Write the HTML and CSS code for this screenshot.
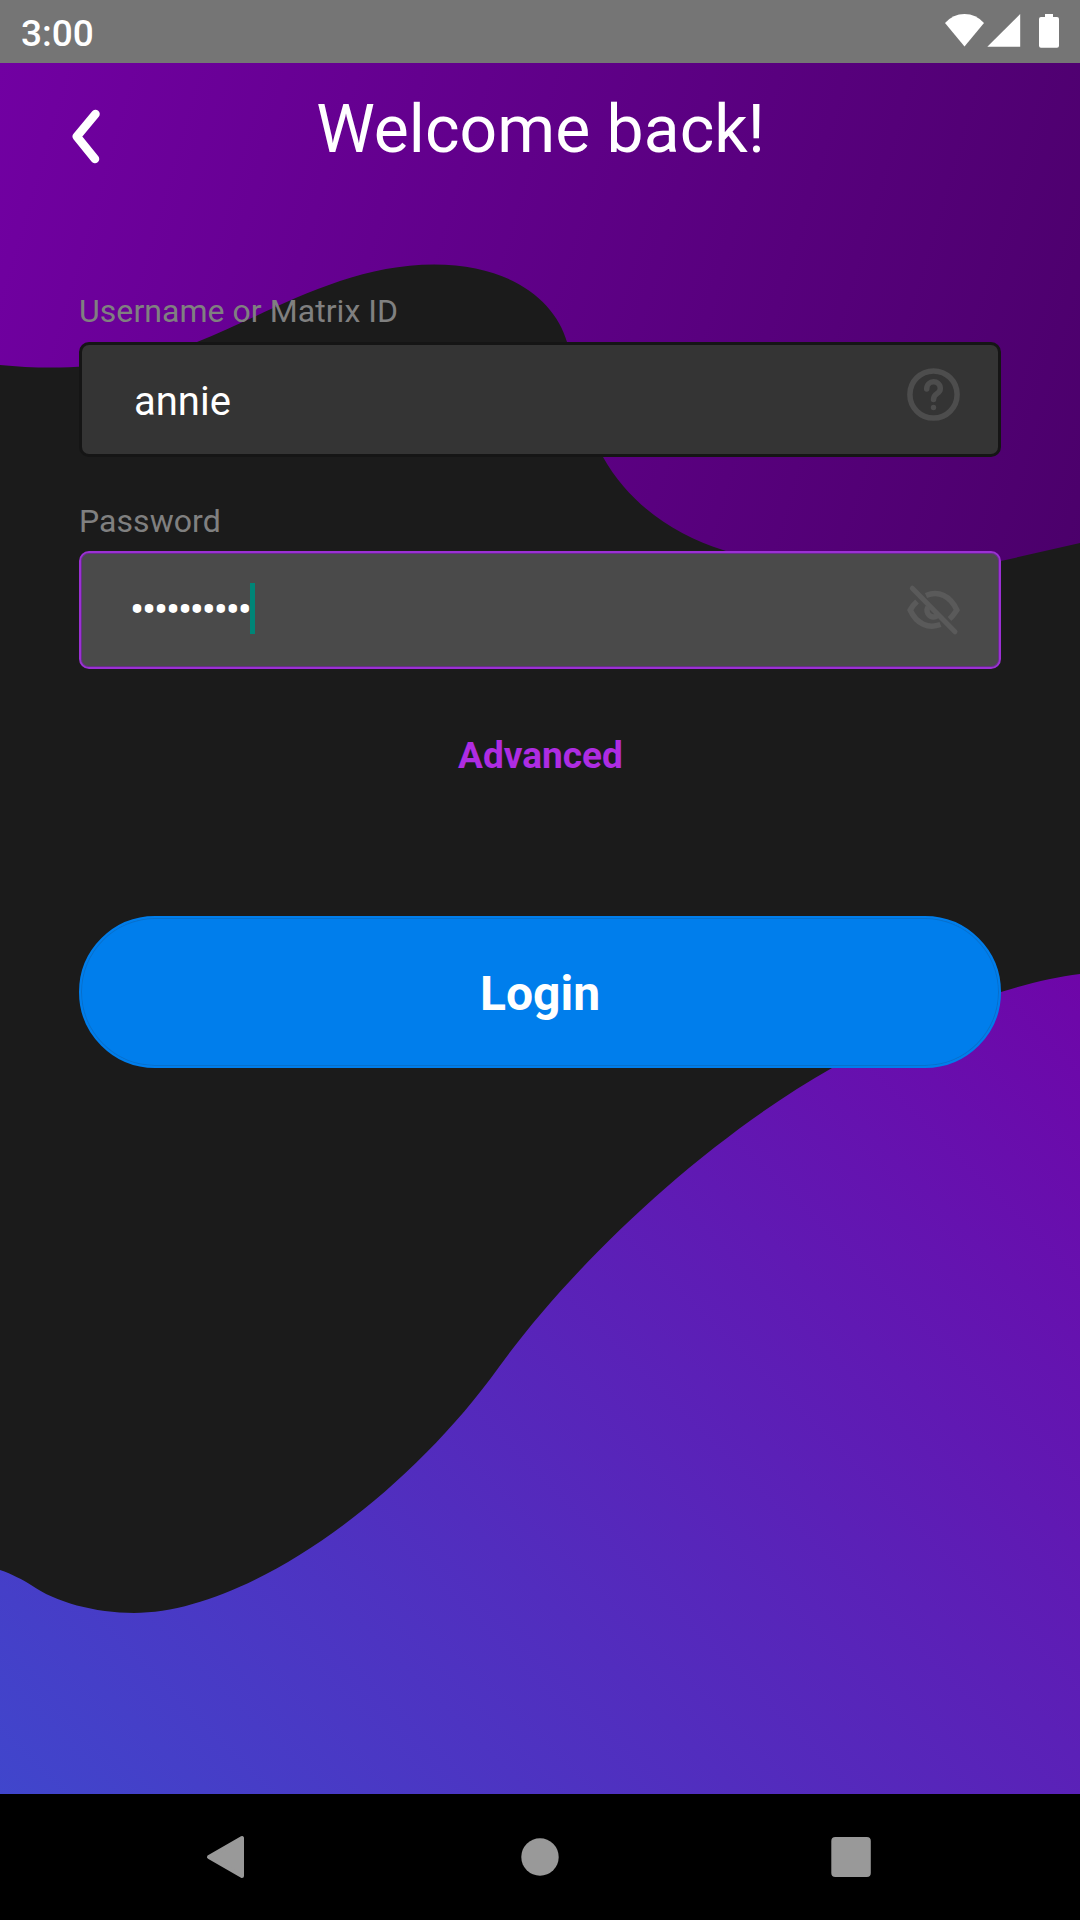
FILE: index.html
```html
<!DOCTYPE html>
<html lang="en">
<head>
<meta charset="utf-8">
<title>Welcome back!</title>
<link rel="stylesheet" href="styles.css">
</head>
<body>
<div class="screen">
  <svg class="backdrop" viewBox="0 0 1080 1920" aria-hidden="true">
    <defs>
      <linearGradient id="top" gradientUnits="userSpaceOnUse" x1="0" y1="63" x2="1170" y2="405">
        <stop offset="0" stop-color="#7100a2"/>
        <stop offset="1" stop-color="#4a0069"/>
      </linearGradient>
      <linearGradient id="bottom" gradientUnits="userSpaceOnUse" x1="0" y1="1794" x2="1030" y2="764">
        <stop offset="0" stop-color="#4046cc"/>
        <stop offset="1" stop-color="#7200a5"/>
      </linearGradient>
    </defs>
    <path fill="url(#top)" d="M0 0V365C60 371 130 368 197 342C270 313 345 264.500 434 264.500C510 264.500 555 300 567 342C576 390 584 420 603 457C630 505 675 535 723 550C830 588 930 580 1001 561L1080 543V0Z"/>
    <path fill="url(#bottom)" d="M0 1570C12 1574 23 1580 31 1585C55 1602 95 1613 134 1613C245 1613 403 1501 499 1367C575 1262 705 1140 832 1068C885 1036 945 1009 1001 992C1030 983 1055 977 1080 974V1920H0Z"/>
  </svg>

  <div class="status">
    <span class="time">3:00</span>
    <svg class="status-icons" viewBox="0 0 115 36" aria-hidden="true">
      <path d="M0 10Q8 1 19.500 1T39 10L19.500 33.500Z"/>
      <path d="M42.300 33.700L75.200 1V33.700Z"/>
      <path d="M100 1h8v3h4q2 0 2 2v26.700q0 2-2 2H96q-2 0-2-2V6q0-2 2-2h4z"/>
    </svg>
  </div>

  <header class="header">
    <svg class="chevron" viewBox="0 0 30 56" aria-label="Back"><path d="M23.500 6L4.800 28.500L23 51"/></svg>
    <h1 class="title">Welcome back!</h1>
  </header>

  <main class="form">
    <div class="label">Username or Matrix ID</div>
    <div class="field">
      <span class="value">annie</span>
      <svg class="icon help" viewBox="0 0 54 54" aria-hidden="true">
        <circle cx="27.500" cy="27.500" r="23.600"/>
        <path d="M20.700 22C20.700 12.500 34.300 12.500 34.300 21.500C34.300 27.500 27.500 25.500 27.500 32.500"/>
        <circle class="dot" cx="27.500" cy="40.500" r="2.700"/>
      </svg>
    </div>
    <div class="label label-password">Password</div>
    <div class="field focused">
      <span class="dots">••••••••••</span><span class="caret"></span>
      <svg class="icon eye" viewBox="-.5 0 54 54" aria-hidden="true">
        <path d="M19.500 12.500C32 7 44 13 50.300 27C48 30.500 46 33.500 43 36"/>
        <path d="M10.500 18.500Q6 22.500 3.700 27C10 41 22 46 34 41.500"/>
        <path d="M21.500 24C18 30 25 37 31 32.500"/>
        <path class="slash" d="M5.800 5.200L48.500 48.800"/>
      </svg>
    </div>
    <div class="advanced">Advanced</div>
    <div class="login">Login</div>
  </main>

  <nav class="nav">
    <svg viewBox="0 0 1080 126" aria-hidden="true">
      <path class="rounded" d="M209 63L242 44V82Z"/>
      <circle cx="540" cy="63" r="18.700"/>
      <rect x="831.300" y="43" width="39.500" height="40" rx="4"/>
    </svg>
  </nav>
</div>
</body>
</html>
```
FILE: styles.css
```css
* { box-sizing: border-box; }
body { margin: 0; font-family: Roboto, "Liberation Sans", sans-serif; }
.screen {
  position: relative;
  isolation: isolate;
  width: 1080px;
  height: 1920px;
  overflow: hidden;
  background: #1b1b1b;
  display: flex;
  flex-direction: column;
}
.backdrop { position: absolute; inset: 0; width: 1080px; height: 1920px; z-index: -1; }
.status {
  flex: none;
  height: 63px;
  background: #757575;
  color: #fff;
  display: flex;
  justify-content: space-between;
  padding: 0 20px 0 21px;
}
.time { font-size: 37px; font-weight: 500; line-height: 68px; }
.status-icons { width: 115px; height: 36px; margin-top: 13px; fill: #fff; }
.header {
  flex: none;
  height: 231px;
  display: grid;
  grid-template-columns: 200px 1fr 200px;
  align-items: start;
}
.chevron { width: 30px; height: 56px; margin: 45px 0 0 72px; fill: none; stroke: #fff; stroke-width: 8.500; stroke-linecap: round; stroke-linejoin: round; }
.title { margin: 28px 0 0; padding-left: 1px; font-size: 66px; font-weight: 400; line-height: 78px; letter-spacing: 0.05px; color: #fff; text-align: center; white-space: nowrap; }
.form { flex: 1; padding: 0 79px; display: flex; flex-direction: column; }
.label { height: 48px; line-height: 34px; font-size: 32px; letter-spacing: 0.05px; color: #808080; white-space: nowrap; }
.label-password { margin-top: 46px; line-height: 36px; }
.field {
  flex: none;
  height: 115px;
  border: 3px solid #151515;
  border-radius: 10px;
  background: #343434;
  color: #fff;
  display: flex;
  align-items: center;
  padding: 0 38px 0 52px;
}
.field.focused { height: 118px; border: 2px solid #9b30d4; background: #4a4a4a; box-shadow: inset 0 0 0 1px #673087; padding: 0 39px 0 49px; }
.value { font-size: 40px; line-height: 48px; padding-top: 4px; }
.dots { width: 120px; font-size: 42px; line-height: 48px; letter-spacing: -2.2px; white-space: nowrap; }
.caret { width: 5px; height: 51px; margin-bottom: 3px; background: #008577; }
.icon { width: 54px; height: 54px; margin-left: auto; fill: none; stroke-width: 5.500; }
.help { stroke: #4d4d4d; margin-bottom: 11px; stroke-linecap: round; }
.help .dot { fill: #4d4d4d; stroke: none; }
.eye { stroke: #5a5a5a; }
.slash { stroke-linecap: round; stroke-width: 5; }
.advanced { margin-top: 65px; padding-left: 1px; height: 44px; line-height: 44px; font-size: 37px; font-weight: 700; color: #ae2ce2; text-align: center; }
.login {
  margin-top: 138px;
  height: 152px;
  border: 2px solid #007eec;
  border-radius: 76px;
  background: #007eec;
  box-shadow: inset 0 0 0 1px #0870cb;
  color: #fff;
  font-size: 48px;
  font-weight: 700;
  line-height: 151px;
  text-align: center;
}
.nav { flex: none; height: 126px; background: #000; }
.nav svg { display: block; width: 1080px; height: 126px; fill: #999; }
.rounded { stroke: #999; stroke-width: 4; stroke-linejoin: round; }
```
